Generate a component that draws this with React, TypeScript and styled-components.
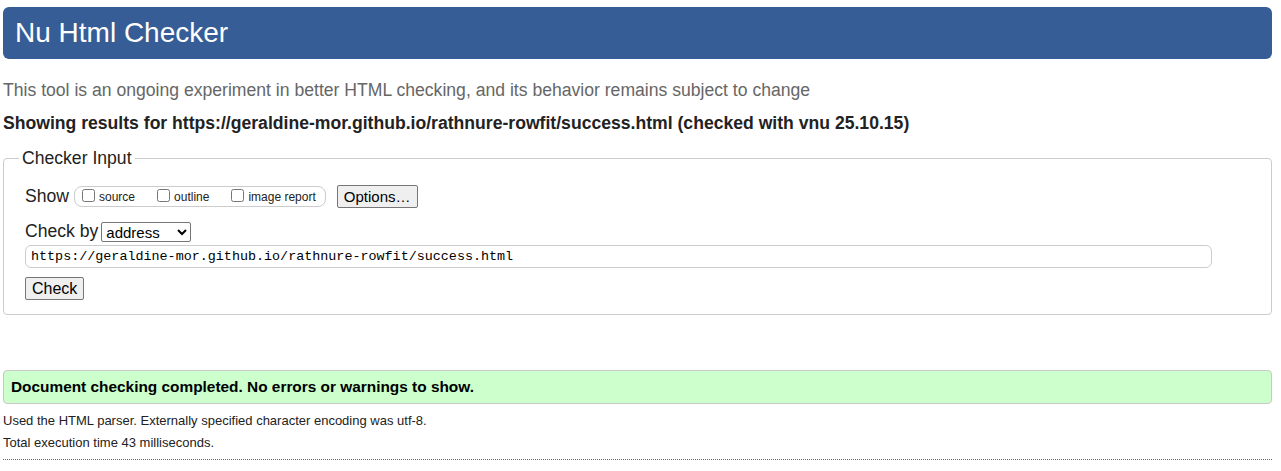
import React from "react"
import styled, { createGlobalStyle } from "styled-components"

const GlobalStyle = createGlobalStyle`
  html, body {
    margin: 0;
    padding: 0;
    background: #fff;
  }
  body {
    font-family: "Liberation Sans", Arial, sans-serif;
    color: #222;
  }
`

const Page = styled.div`
  padding: 7px 9px 0 3px;
`

const Banner = styled.h1`
  margin: 0;
  height: 52px;
  display: flex;
  align-items: center;
  padding: 0 12px;
  background-color: #365d95;
  color: #fff;
  border-radius: 6px;
  font-size: 28px;
  font-weight: normal;
`

const Intro = styled.p`
  margin: 19px 0 0;
  color: #666;
  font-size: 17.6px;
  line-height: 24px;
`

const ResultsFor = styled.p`
  margin: 9px 0 0;
  font-size: 17.6px;
  line-height: 24px;
  font-weight: bold;
  color: #222;
`

const Fieldset = styled.fieldset`
  margin: 13px 0 0;
  padding: 16px 21px 14px;
  border: 1px solid #ccc;
  border-radius: 4px;

  legend {
    margin-left: -6px;
    padding: 0 3px;
    font-size: 17.6px;
    color: #222;
  }
`

const Row = styled.div<{ $gap?: number; $top?: number }>`
  display: flex;
  align-items: center;
  gap: ${(p) => p.$gap ?? 0}px;
  margin-top: ${(p) => p.$top ?? 0}px;
  font-size: 17.6px;
  color: #222;
`

const OptionsGroup = styled.span`
  display: inline-flex;
  align-items: center;
  height: 19px;
  margin-left: 5px;
  padding: 0 9px 0 7px;
  border: 1px solid #ccc;
  border-radius: 8px;
  font-size: 12px;
`

const CheckLabel = styled.label`
  display: inline-flex;
  align-items: center;
  margin-right: 22px;
  &:last-child {
    margin-right: 0;
  }
  input {
    margin: 0 4px 2px 0;
    width: 13px;
    height: 13px;
  }
`

const Button = styled.button<{ $size?: number }>`
  font-family: "Liberation Sans", Arial, sans-serif;
  font-size: ${(p) => p.$size ?? 15}px;
  color: #000;
  background: #efefef;
  border: 1px solid #767676;
  border-radius: 2px;
  padding: 0 6px;
  height: 23px;
`

const Select = styled.select`
  margin-left: 3px;
  width: 90px;
  height: 20px;
  font-family: "Liberation Sans", Arial, sans-serif;
  font-size: 15px;
  color: #000;
  border: 1px solid #767676;
  border-radius: 2px;
  background: #fff;
`

const UrlInput = styled.input`
  display: block;
  box-sizing: border-box;
  width: 1187px;
  height: 23px;
  margin-top: 3px;
  padding: 0 5px;
  font-family: "Liberation Mono", monospace;
  font-size: 13.4px;
  color: #000;
  border: 1px solid #ccc;
  border-radius: 6px;
`

const SubmitRow = styled.div`
  margin-top: 9px;
`

const Success = styled.div`
  margin: 55px 0 0;
  height: 32px;
  display: flex;
  align-items: center;
  padding: 0 7px;
  background: #ccffcc;
  border: 1px solid #c8c8c8;
  border-radius: 4px;
  font-size: 15.4px;
  font-weight: bold;
  color: #000;
`

const Details = styled.div`
  margin-top: 6px;
  font-size: 13px;
  line-height: 22px;
  color: #222;

  p {
    margin: 0;
  }
`

const Rule = styled.hr`
  margin: 5px 0 0;
  border: 0;
  border-top: 1px dotted #666;
`

export default function App() {
  const url = "https://geraldine-mor.github.io/rathnure-rowfit/success.html"
  return (
    <>
      <GlobalStyle />
      <Page>
        <Banner>Nu Html Checker</Banner>
        <Intro>
          This tool is an ongoing experiment in better HTML checking, and its
          behavior remains subject to change
        </Intro>
        <ResultsFor>
          Showing results for {url} (checked with vnu 25.10.15)
        </ResultsFor>
        <Fieldset>
          <legend>Checker Input</legend>
          <Row $gap={11}>
            <span>
              Show
              <OptionsGroup>
                <CheckLabel>
                  <input type="checkbox" />
                  source
                </CheckLabel>
                <CheckLabel>
                  <input type="checkbox" />
                  outline
                </CheckLabel>
                <CheckLabel>
                  <input type="checkbox" />
                  image report
                </CheckLabel>
              </OptionsGroup>
            </span>
            <Button type="button">Options…</Button>
          </Row>
          <Row $top={13}>
            Check by
            <Select defaultValue="address">
              <option value="address">address</option>
              <option value="file">file upload</option>
              <option value="text">text input</option>
            </Select>
          </Row>
          <UrlInput type="url" defaultValue={url} />
          <SubmitRow>
            <Button type="submit" $size={16}>
              Check
            </Button>
          </SubmitRow>
        </Fieldset>
        <Success>Document checking completed. No errors or warnings to show.</Success>
        <Details>
          <p>Used the HTML parser. Externally specified character encoding was utf-8.</p>
          <p>Total execution time 43 milliseconds.</p>
        </Details>
        <Rule />
      </Page>
    </>
  )
}
